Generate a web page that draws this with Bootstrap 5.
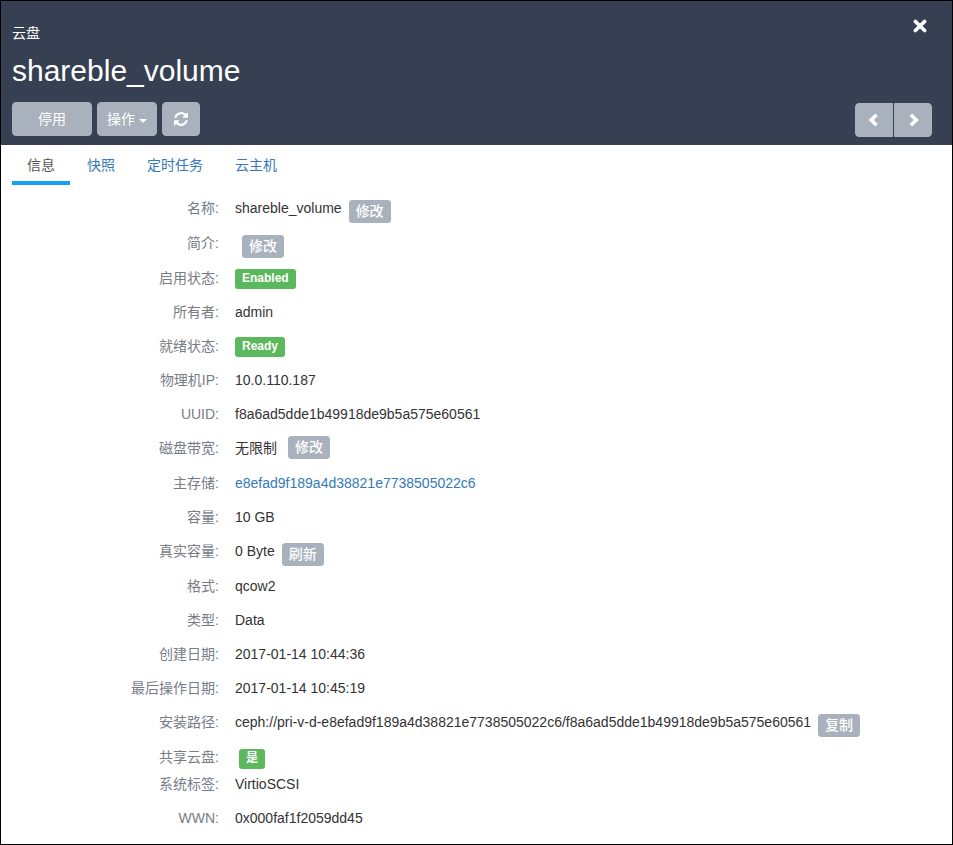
<!DOCTYPE html>
<html lang="zh-CN">
<head>
<meta charset="utf-8">
<meta name="viewport" content="width=device-width, initial-scale=1">
<title>云盘 - shareble_volume</title>
<link href="https://cdn.jsdelivr.net/npm/bootstrap@5.3.0/dist/css/bootstrap.min.css" rel="stylesheet">
<style>
  body { font: 14px/20px "Liberation Sans", "Noto Sans CJK SC", sans-serif; color: #333; background: #fff; }
  .panel { border: 1px solid #000; }
  .panel-top { background: #364052; padding: 22px 20px 8px 11px; color: #fff; }
  .panel-title { font-size: 30px; line-height: 34px; font-weight: 400; margin: 11px 0 14px; }
  .close-btn { width: 24px; height: 24px; line-height: 0; margin-top: -9px; }
  .btn-tool { --bs-btn-color: #fff; --bs-btn-bg: #a9b1bd; --bs-btn-border-color: #a9b1bd;
    --bs-btn-hover-color: #fff; --bs-btn-hover-bg: #949dab; --bs-btn-hover-border-color: #949dab;
    --bs-btn-active-color: #fff; --bs-btn-active-bg: #868f9e; --bs-btn-active-border-color: #868f9e;
    --bs-btn-border-radius: 4px; --bs-btn-font-size: 14px; --bs-btn-line-height: 20px;
    --bs-btn-padding-x: 9px; --bs-btn-padding-y: 6px; height: 34px; }
  .tool-row { gap: 5px; }
  .btn-wide { width: 80px; }
  .btn-menu { width: 60px; white-space: nowrap; }
  .btn-menu::after { border-width: 4px; border-bottom: 0; margin-left: 4px; vertical-align: 1px; }
  .btn-icon { width: 38px; line-height: 0; }
  .pager { gap: 1px; margin-top: 1px; }
  .tab-row { --bs-nav-link-padding-x: 15px; --bs-nav-link-padding-y: 10px; --bs-nav-link-color: #337ab7; --bs-nav-link-hover-color: #23527c;
    gap: 2px; padding-left: 11px; }
  .tab-row .nav-link { height: 40px; border-bottom: 4px solid transparent; padding-bottom: 6px; }
  .tab-row .nav-link.active { color: #555; border-bottom-color: #189ffb; }
  .props { padding: 13px 11px 0 0; }
  .prop { gap: 16px; min-height: 34px; }
  .prop dt { flex: 0 0 218px; font-weight: 400; color: #777c85; text-align: right; }
  .prop dd { min-width: 0; }
  .prop-edit { min-height: 35px; }
  .prop-tight { min-height: 27px; }
  .btn-mini { --bs-btn-font-weight: 500; --bs-btn-border-radius: 3px;
    padding: 0 6px 2px; height: 23px; margin: 2px 0 0 7px; }
  .btn-mid { margin: -2px 0 0 11px; }
  .state { background: #5cb85c; border-radius: 3px; font-size: 12px; line-height: 12px; padding: 3px 7px 5px; margin-top: 1px; }
  .state-zh { margin: 2px 0 0 4px; }
  .prop a { color: #337ab7; text-decoration: none; }
</style>
<script src="https://cdn.jsdelivr.net/npm/bootstrap@5.3.0/dist/js/bootstrap.bundle.min.js" defer></script>
</head>
<body>
<main class="panel min-vh-100">
  <header class="panel-top">
    <div class="d-flex justify-content-between align-items-start">
      <div>云盘</div>
      <button type="button" class="close-btn btn p-0 border-0" aria-label="关闭">
        <svg width="14" height="14" viewBox="0 0 14 14" fill="none" stroke="#fff" stroke-width="3.6" stroke-linecap="round"><path d="M2.4 2.4l9.2 9.2M11.6 2.4l-9.2 9.2"/></svg>
      </button>
    </div>
    <h1 class="panel-title">shareble_volume</h1>
    <div class="d-flex justify-content-between">
      <div class="tool-row d-flex">
        <button type="button" class="btn btn-tool btn-wide">停用</button>
        <button type="button" class="btn btn-tool btn-menu dropdown-toggle">操作</button>
        <button type="button" class="btn btn-tool btn-icon p-0" aria-label="刷新">
          <svg width="14" height="14" viewBox="0 0 1536 1536" fill="#fff"><path d="M1511 928q0 5-1 7-64 268-268 434.500T764 1536q-146 0-282.500-55T238 1324l-129 129q-19 19-45 19t-45-19-19-45V960q0-26 19-45t45-19h448q26 0 45 19t19 45-19 45l-137 137q71 66 161 102t187 36q134 0 250-65t186-179q11-17 53-117 8-23 30-23h192q13 0 22.500 9.500t9.500 22.500zm25-800v448q0 26-19 45t-45 19h-448q-26 0-45-19t-19-45 19-45l138-138Q969 256 768 256q-134 0-250 65T332 500q-11 17-53 117-8 23-30 23H50q-13 0-22.500-9.500T18 608v-7q65-268 270-434.500T768 0q146 0 284 55.500T1297 212l130-129q19-19 45-19t45 19 19 45z"/></svg>
        </button>
      </div>
      <div class="pager d-flex" role="group" aria-label="翻页">
        <button type="button" class="btn btn-tool btn-icon p-0 rounded-end-0" aria-label="上一个">
          <svg width="14" height="14" viewBox="0 0 14 14" fill="none" stroke="#fff" stroke-width="3.6"><path d="M9.600 1.700L4.200 7L9.600 12.300"/></svg>
        </button>
        <button type="button" class="btn btn-tool btn-icon p-0 rounded-start-0" aria-label="下一个">
          <svg width="14" height="14" viewBox="0 0 14 14" fill="none" stroke="#fff" stroke-width="3.6"><path d="M4.900 1.700L10.300 7L4.900 12.300"/></svg>
        </button>
      </div>
    </div>
  </header>
  <nav class="tab-row nav">
    <a class="nav-link active" aria-current="page" href="#info">信息</a>
    <a class="nav-link" href="#snapshots">快照</a>
    <a class="nav-link" href="#schedules">定时任务</a>
    <a class="nav-link" href="#hosts">云主机</a>
  </nav>
  <dl class="props mb-0" id="info">
    <div class="prop prop-edit d-flex"><dt>名称:</dt><dd class="d-flex align-items-start mb-0">shareble_volume<button type="button" class="btn btn-tool btn-mini">修改</button></dd></div>
    <div class="prop prop-edit d-flex"><dt>简介:</dt><dd class="d-flex align-items-start mb-0"><button type="button" class="btn btn-tool btn-mini">修改</button></dd></div>
    <div class="prop d-flex"><dt>启用状态:</dt><dd class="d-flex align-items-start mb-0"><span class="badge state">Enabled</span></dd></div>
    <div class="prop d-flex"><dt>所有者:</dt><dd class="mb-0">admin</dd></div>
    <div class="prop d-flex"><dt>就绪状态:</dt><dd class="d-flex align-items-start mb-0"><span class="badge state">Ready</span></dd></div>
    <div class="prop d-flex"><dt>物理机IP:</dt><dd class="mb-0">10.0.110.187</dd></div>
    <div class="prop d-flex"><dt>UUID:</dt><dd class="mb-0">f8a6ad5dde1b49918de9b5a575e60561</dd></div>
    <div class="prop prop-edit d-flex"><dt>磁盘带宽:</dt><dd class="d-flex align-items-start mb-0">无限制<button type="button" class="btn btn-tool btn-mini btn-mid">修改</button></dd></div>
    <div class="prop d-flex"><dt>主存储:</dt><dd class="mb-0"><a href="#storage">e8efad9f189a4d38821e7738505022c6</a></dd></div>
    <div class="prop d-flex"><dt>容量:</dt><dd class="mb-0">10 GB</dd></div>
    <div class="prop prop-edit d-flex"><dt>真实容量:</dt><dd class="d-flex align-items-start mb-0">0 Byte<button type="button" class="btn btn-tool btn-mini">刷新</button></dd></div>
    <div class="prop d-flex"><dt>格式:</dt><dd class="mb-0">qcow2</dd></div>
    <div class="prop d-flex"><dt>类型:</dt><dd class="mb-0">Data</dd></div>
    <div class="prop d-flex"><dt>创建日期:</dt><dd class="mb-0">2017-01-14 10:44:36</dd></div>
    <div class="prop d-flex"><dt>最后操作日期:</dt><dd class="mb-0">2017-01-14 10:45:19</dd></div>
    <div class="prop prop-edit d-flex"><dt>安装路径:</dt><dd class="d-flex align-items-start mb-0">ceph://pri-v-d-e8efad9f189a4d38821e7738505022c6/f8a6ad5dde1b49918de9b5a575e60561<button type="button" class="btn btn-tool btn-mini flex-shrink-0">复制</button></dd></div>
    <div class="prop prop-tight d-flex"><dt>共享云盘:</dt><dd class="d-flex align-items-start mb-0"><span class="badge state state-zh">是</span></dd></div>
    <div class="prop d-flex"><dt>系统标签:</dt><dd class="mb-0">VirtioSCSI</dd></div>
    <div class="prop d-flex"><dt>WWN:</dt><dd class="mb-0">0x000faf1f2059dd45</dd></div>
  </dl>
</main>
</body>
</html>
